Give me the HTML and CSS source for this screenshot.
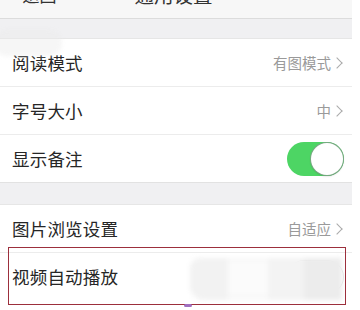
FILE: index.html
```html
<!DOCTYPE html>
<html>
<head>
<meta charset="utf-8">
<link rel="stylesheet" href="styles.css">
</head>
<body>
<div class="screen">
  <div class="nav">
    <span class="back">&lt;返回</span>
    <span class="title">通用设置</span>
  </div>
  <div class="gap"></div>
  <div class="group">
    <div class="row"><span class="label">阅读模式</span><span class="value">有图模式<span class="chev"></span></span></div>
    <div class="row"><span class="label">字号大小</span><span class="value">中<span class="chev"></span></span></div>
    <div class="row"><span class="label">显示备注</span><span class="switch on"><span class="knob"></span></span></div>
  </div>
  <div class="gap gap2"></div>
  <div class="group">
    <div class="row"><span class="label">图片浏览设置</span><span class="value">自适应<span class="chev"></span></span></div>
    <div class="row"><span class="label">视频自动播放</span><span class="switch off"><span class="knob"></span></span></div>
  </div>
  <div class="ghost"></div>
  <div class="mosaic">
    <span class="m1"></span><span class="m2"></span><span class="m3"></span><span class="m4"></span>
  </div>
  <div class="mark"></div>
  <div class="tick"></div>
</div>
</body>
</html>
```
FILE: styles.css
```css
html, body {
  margin: 0;
  padding: 0;
  background: #ffffff;
}
body {
  width: 360px;
  height: 310px;
  overflow: hidden;
  font-family: "Noto Sans CJK SC", "Noto Sans", sans-serif;
}
.screen {
  position: relative;
  width: 352px;
  height: 310px;
  background: #ffffff;
}
.nav {
  height: 18px;
  background: #f7f7f7;
  border-bottom: 1px solid #dcdcdc;
  overflow: hidden;
  display: flex;
  align-items: flex-start;
  color: #333;
  line-height: 20px;
}
.nav .back {
  font-size: 17px;
  margin-top: -15px;
  margin-left: 13px;
}
.nav .title {
  font-size: 19.5px;
  margin-top: -15px;
  margin-left: 78px;
}
.gap {
  height: 19px;
  background: #f0f0f2;
  border-bottom: 1px solid #e6e6e6;
}
.gap2 {
  height: 21px;
  border-top: 1px solid #e2e2e2;
}
.group {
  background: #fff;
}
.row {
  height: 47px;
  border-bottom: 1px solid #ececec;
  display: flex;
  align-items: center;
  justify-content: space-between;
  padding: 0 8px 0 12px;
}
.group .row:last-child {
  border-bottom: 0;
}
.group:last-of-type .row:last-child {
  border-bottom: 1px solid #e6e6e6;
}
.label {
  font-size: 17.5px;
  color: #262626;
  letter-spacing: 0.2px;
}
.value {
  font-size: 14.5px;
  color: #9a9a9a;
  display: flex;
  align-items: center;
}
.chev {
  display: inline-block;
  width: 7px;
  height: 7px;
  border-top: 1.3px solid #aaa;
  border-right: 1.3px solid #aaa;
  transform: rotate(45deg);
  margin-left: 2px;
  margin-right: 3px;
}
.switch {
  position: relative;
  width: 57px;
  height: 34px;
  border-radius: 17px;
  box-sizing: border-box;
}
.switch.on {
  background: #4dd564;
}
.switch.on .knob {
  position: absolute;
  right: 1px;
  top: 1px;
  width: 32px;
  height: 32px;
  border-radius: 50%;
  background: #fff;
  box-shadow: 0 0 0 1px #7aa884, 0 1px 2px rgba(0,0,0,0.25);
}
.switch.off {
  background: #fff;
  border: 1.5px solid #e2e2e2;
}
.switch.off .knob {
  position: absolute;
  left: 0;
  top: 0;
  width: 31px;
  height: 31px;
  border-radius: 50%;
  background: #fff;
  box-shadow: 0 1px 3px rgba(0,0,0,0.3);
}
.ghost {
  position: absolute;
  left: -6px;
  top: 30px;
  width: 68px;
  height: 26px;
  border-radius: 14px;
  background: rgba(235,235,235,0.45);
  filter: blur(2px);
}
.mosaic {
  position: absolute;
  left: 190px;
  top: 258px;
  width: 152px;
  height: 42px;
  background: #f8f8f8;
  border-radius: 10px 4px 4px 14px;
  filter: blur(2.5px);
}
.mosaic span {
  position: absolute;
  top: 0;
  height: 42px;
}
.mosaic .m1 { left: 0; width: 38px; background: #f2f2f2; border-radius: 10px 0 0 14px; }
.mosaic .m2 { left: 38px; width: 40px; background: #fbfbfb; top: 4px; height: 32px; }
.mosaic .m3 { left: 78px; width: 36px; background: #f3f3f3; }
.mosaic .m4 { left: 114px; width: 38px; background: #ececec; }
.mark {
  position: absolute;
  left: 8px;
  top: 247px;
  width: 336px;
  height: 56px;
  border: 1.5px solid #9c2f3c;
  background: transparent;
}
.tick {
  position: absolute;
  left: 184px;
  top: 304px;
  width: 8px;
  height: 3px;
  background: #a070c0;
  border-radius: 2px;
}
```
